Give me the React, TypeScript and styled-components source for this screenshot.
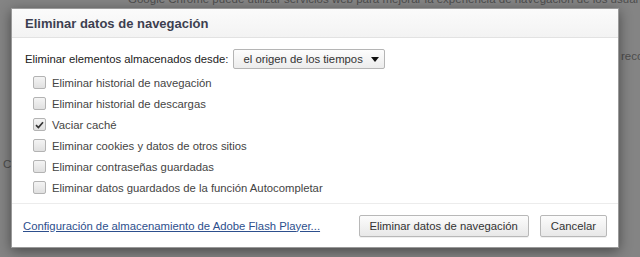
import React from "react";
import styled, { createGlobalStyle } from "styled-components";

const Global = createGlobalStyle`
  html, body { margin: 0; padding: 0; }
  body { width: 640px; height: 257px; overflow: hidden; font-family: "Liberation Sans", Arial, sans-serif; }
`;

const Page = styled.div`
  position: relative;
  width: 640px;
  height: 257px;
  background: #848484;
  overflow: hidden;
  font-size: 11.3px;
  color: #4a4a4a;
`;

const BgLine = styled.div<{ $top: number; $left: number }>`
  position: absolute;
  top: ${(p) => p.$top}px;
  left: ${(p) => p.$left}px;
  white-space: nowrap;
  font-size: 11.5px;
  color: #4d4d4d;
`;

const Dialog = styled.div`
  position: absolute;
  left: 11px;
  top: 8px;
  width: 606px;
  height: 238px;
  background: #fff;
  border: 1px solid #9a9a9a;
  box-shadow: 0 3px 12px rgba(0, 0, 0, 0.45);
  display: flex;
  flex-direction: column;
`;

const Header = styled.div`
  height: 27px;
  background: linear-gradient(#fbfbfb, #f3f3f3);
  border-bottom: 1px solid #e2e2e2;
  display: flex;
  align-items: center;
  padding: 1px 13px 0;
`;

const Title = styled.div`
  font-size: 13px;
  font-weight: bold;
  color: #3d3f50;
`;

const Body = styled.div`
  flex: 1;
  padding: 11px 13px 0 13px;
  display: flex;
  flex-direction: column;
`;

const SourceRow = styled.div`
  display: flex;
  align-items: center;
  gap: 5px;
  color: #222;
  height: 20px;
`;

const Select = styled.div`
  width: 152px;
  height: 20px;
  box-sizing: border-box;
  border: 1px solid #b5b5b5;
  border-radius: 2px;
  background: linear-gradient(#fdfdfd, #ececec);
  display: flex;
  align-items: center;
  justify-content: space-between;
  padding: 0 5px 0 9px;
  color: #333;
  white-space: nowrap;
`;

const Arrow = styled.span`
  width: 0;
  height: 0;
  border-left: 4px solid transparent;
  border-right: 4px solid transparent;
  border-top: 5px solid #111;
`;

const List = styled.div`
  display: flex;
  flex-direction: column;
  margin-top: 3px;
  padding-left: 8px;
`;

const Option = styled.label`
  display: flex;
  align-items: center;
  gap: 6px;
  height: 21px;
  color: #444;
`;

const Box = styled.span<{ $checked?: boolean }>`
  width: 13px;
  height: 13px;
  box-sizing: border-box;
  border: 1px solid #b3b3b3;
  border-radius: 2px;
  background: linear-gradient(#f4f4f4, #e0e0e0);
  display: flex;
  align-items: center;
  justify-content: center;
`;

const Footer = styled.div`
  height: 43px;
  border-top: 1px solid #ececec;
  display: flex;
  align-items: center;
  padding: 0 11px 0 11px;
`;

const Link = styled.a`
  color: #2d4f8d;
  text-decoration: underline;
  flex: 1;
  white-space: nowrap;
  font-size: 11.3px;
`;

const Button = styled.button`
  font-family: "Liberation Sans", Arial, sans-serif;
  font-size: 11.3px;
  color: #333;
  height: 22px;
  padding: 0 10px;
  margin-left: 11px;
  border: 1px solid #b8b8b8;
  border-radius: 2px;
  background: linear-gradient(#fcfcfc, #e8e8e8);
  box-shadow: 0 1px 0 rgba(0,0,0,0.06);
`;

const options = [
  { label: "Eliminar historial de navegación", checked: false },
  { label: "Eliminar historial de descargas", checked: false },
  { label: "Vaciar caché", checked: true },
  { label: "Eliminar cookies y datos de otros sitios", checked: false },
  { label: "Eliminar contraseñas guardadas", checked: false },
  { label: "Eliminar datos guardados de la función Autocompletar", checked: false },
];

export default function App() {
  return (
    <Page>
      <Global />
      <BgLine $top={-7} $left={128}>
        Google Chrome puede utilizar servicios web para mejorar la experiencia de navegación de los usuarios.
      </BgLine>
      <BgLine $top={50} $left={621}>recco</BgLine>
      <BgLine $top={158} $left={3}>C</BgLine>
      <Dialog>
        <Header>
          <Title>Eliminar datos de navegación</Title>
        </Header>
        <Body>
          <SourceRow>
            <span>Eliminar elementos almacenados desde:</span>
            <Select>
              <span>el origen de los tiempos</span>
              <Arrow />
            </Select>
          </SourceRow>
          <List>
            {options.map((o) => (
              <Option key={o.label}>
                <Box $checked={o.checked}>
                  {o.checked && (
                    <svg width="9" height="8" viewBox="0 0 9 8">
                      <path d="M1 4.2 L3.4 6.5 L8 1.2" fill="none" stroke="#333" strokeWidth="1.7" />
                    </svg>
                  )}
                </Box>
                <span>{o.label}</span>
              </Option>
            ))}
          </List>
        </Body>
        <Footer>
          <Link href="#">Configuración de almacenamiento de Adobe Flash Player...</Link>
          <Button>Eliminar datos de navegación</Button>
          <Button>Cancelar</Button>
        </Footer>
      </Dialog>
    </Page>
  );
}
